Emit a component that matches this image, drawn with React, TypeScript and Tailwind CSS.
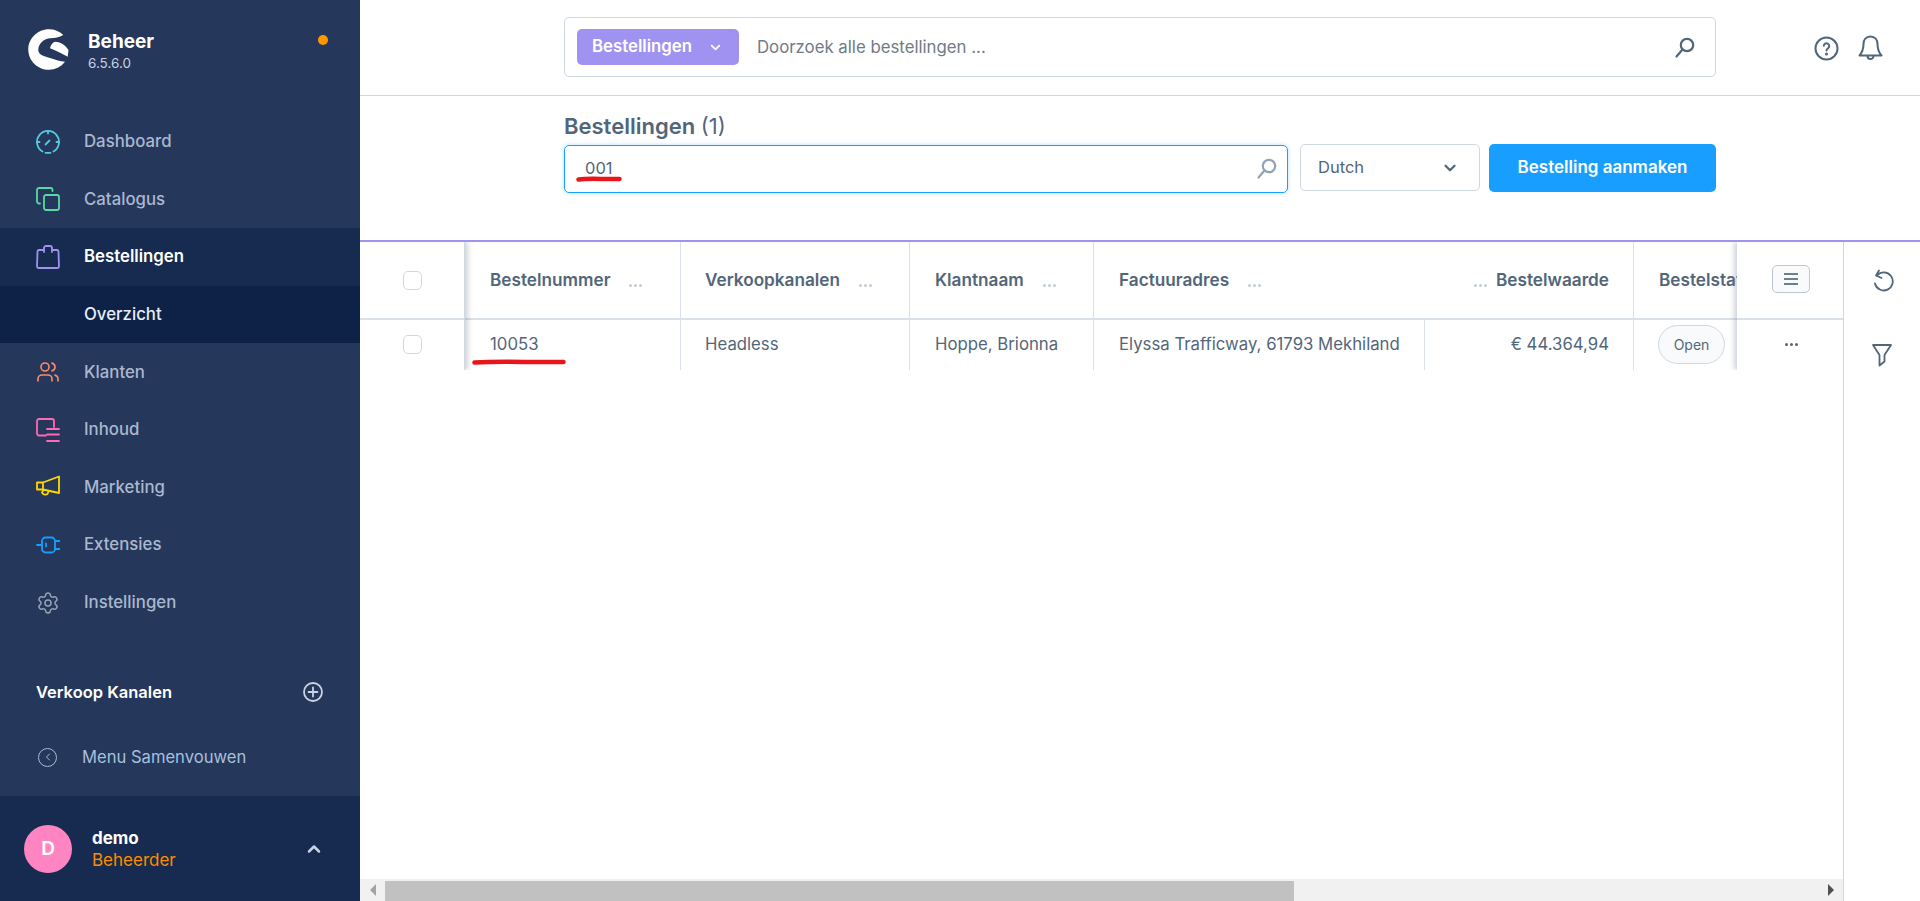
import React from "react";
import { ChevronDown, ChevronUp, ChevronLeft, Settings, Users } from "lucide-react";

const Ico = ({ c, children, w = 1.8 }: { c: string; children: React.ReactNode; w?: number }) => (
  <svg width="24" height="24" viewBox="0 0 24 24" fill="none" stroke={c} strokeWidth={w} strokeLinecap="round" strokeLinejoin="round">
    {children}
  </svg>
);

const nav: { label: string; icon: React.ReactNode }[] = [
  {
    label: "Dashboard",
    icon: (
      <Ico c="#57c8e0">
        <path d="M6.500 21.500A11 11 0 1 1 17.500 21.500" />
        <path d="M9.500 22.800h5M12 1v2.500M1 12h2.500M20.500 12H23M9.500 14.500l4-4" />
      </Ico>
    ),
  },
  {
    label: "Catalogus",
    icon: (
      <Ico c="#57d9a3">
        <path d="M4 16.500H3a2 2 0 0 1-2-2V3a2 2 0 0 1 2-2h11.500a2 2 0 0 1 2 2v1" />
        <rect x="8" y="8" width="15" height="15" rx="2" />
      </Ico>
    ),
  },
  {
    label: "Bestellingen",
    icon: (
      <Ico c="#a092f0">
        <path d="M8 5H3a1.500 1.500 0 0 0-1.500 1.500L1 21.500A1.500 1.500 0 0 0 2.500 23h19a1.500 1.500 0 0 0 1.500-1.500l-.5-15A1.500 1.500 0 0 0 21 5h-5" />
        <path d="M8 7V3a2 2 0 0 1 2-2h4a2 2 0 0 1 2 2v4" />
      </Ico>
    ),
  },
  {
    label: "Klanten",
    icon: <Users size={28} color="#ff8a65" strokeWidth={1.6} />,
  },
  {
    label: "Inhoud",
    icon: (
      <Ico c="#ff68b4">
        <path d="M10 17.500H3a2 2 0 0 1-2-2V3a2 2 0 0 1 2-2h13a2 2 0 0 1 2 2v6" />
        <path d="M11 11h12M11 16.500h12M11 23h12" />
      </Ico>
    ),
  },
  {
    label: "Marketing",
    icon: (
      <Ico c="#ffd700">
        <path d="M7 7.500 23 1.500v16.500L7 14.500zM7 7.500H1v7h6" />
        <path d="M7.500 15l-1.500 2.500c0 1.500 3.500 3 5.500 1.500l1-2.500" />
      </Ico>
    ),
  },
  {
    label: "Extensies",
    icon: (
      <Ico c="#189eff">
        <rect x="6" y="4.500" width="13" height="15" rx="3.500" />
        <path d="M1 12h5M19 8h4.500M19 16h4.500M10 10.500v3" />
      </Ico>
    ),
  },
  {
    label: "Instellingen",
    icon: <Settings size={28} color="#93a3b4" strokeWidth={1.5} />,
  },
];

const Search = ({ c }: { c: string }) => (
  <svg width="22" height="22" viewBox="0 0 22 22" fill="none" stroke={c} strokeWidth="2.200" strokeLinecap="round">
    <circle cx="13" cy="8" r="6.200" />
    <path d="M8.500 12.500 2.500 19.500" />
  </svg>
);

const Dots = ({ c = "#c3ccd6" }: { c?: string }) => (
  <span className="inline-flex gap-[2px]">
    <span className="w-[3px] h-[3px] rounded-full" style={{ background: c }} />
    <span className="w-[3px] h-[3px] rounded-full" style={{ background: c }} />
    <span className="w-[3px] h-[3px] rounded-full" style={{ background: c }} />
  </span>
);

const Check = () => <div className="w-[19px] h-[19px] rounded-[5px] border border-[#d1d9e0] bg-white" />;

const Underline = ({ w, className }: { w: number; className: string }) => (
  <svg className={className} width={w} height="6" viewBox={`0 0 ${w} 6`} fill="none">
    <path d={`M2.500 3.500C${w * 0.3} 2 ${w * 0.6} 3.500 ${w - 2.5} 3`} stroke="#e8161b" strokeWidth="4.500" strokeLinecap="round" />
  </svg>
);

export default function App() {
  return (
    <div className="flex w-full h-screen overflow-hidden bg-white font-['Inter',sans-serif] text-[#52667a]">
      {/* Sidebar */}
      <aside className="w-[360px] shrink-0 h-full flex flex-col bg-[#25375a]">
        <div className="h-[113px] shrink-0 pl-[28px] pr-[32px] pt-[29px] flex items-start">
          <svg width="41" height="41" viewBox="0 0 41 41" fill="#fff">
            <path d="M35.300 6C31.500 2 26.500.200 21 .200 9.500.200.300 9.300.300 20.500S9.500 40.800 21 40.800c6 0 12-2.800 16-8-4.500-.5-9.500-1.800-15-3.800-7-2-11.700-3.500-11.700-8 0-6.500 6-11.500 12-11.700 4.500-.2 9-.8 13-3.300z" />
            <path d="M22 19.300c.8-3.500 3-6.600 5.500-6.600 5 0 10.500 4 13 8.300l-.8 6.700c-6.500-3.500-12-6-17.700-8.400z" />
          </svg>
          <div className="ml-[19px] flex-1">
            <div className="text-[19px] font-bold text-white leading-[24px] mt-[1px]">Beheer</div>
            <div className="text-[13.500px] text-[#c4d3e6] leading-[18px]">6.5.6.0</div>
          </div>
          <div className="w-[10px] h-[10px] rounded-full bg-[#ff9800] mt-[6px]" />
        </div>
        <nav className="flex flex-col">
          {nav.map((n) => (
            <React.Fragment key={n.label}>
              <div className={`h-[57.600px] flex items-center pl-[36px] ${n.label === "Bestellingen" ? "bg-[#172a4f]" : ""}`}>
                <span className="w-[24px] h-[26px] flex items-center justify-center">{n.icon}</span>
                <span className={`ml-[24px] text-[16.800px] font-medium ${n.label === "Bestellingen" ? "text-white font-semibold" : "text-[#aab8d0]"}`}>{n.label}</span>
              </div>
              {n.label === "Bestellingen" && (
                <div className="h-[57.600px] flex items-center pl-[84px] bg-[#0e2248] text-[16.800px] font-medium text-[#e6edf6]">Overzicht</div>
              )}
            </React.Fragment>
          ))}
        </nav>
        <div className="flex-1 flex flex-col">
          <div className="mt-[48px] pl-[36px] pr-[37px] flex items-center justify-between h-[26px]">
            <span className="text-[16.500px] font-semibold text-white">Verkoop Kanalen</span>
            <svg width="20" height="20" viewBox="0 0 20 20" fill="none" stroke="#c8d3e4" strokeWidth="1.800" strokeLinecap="round">
              <circle cx="10" cy="10" r="9" />
              <path d="M10 5.500v9M5.500 10h9" />
            </svg>
          </div>
          <div className="mt-[39px] pl-[38px] flex items-center h-[26px]">
            <span className="w-[19px] h-[19px] rounded-full border-[1.500px] border-[#a8bbd6] flex items-center justify-center">
              <ChevronLeft size={12} color="#a8bbd6" strokeWidth={2} />
            </span>
            <span className="ml-[25px] text-[16.600px] text-[#a8c0de]">Menu Samenvouwen</span>
          </div>
        </div>
        <div className="h-[105px] shrink-0 bg-[#172a4f] flex items-center pl-[24px] pr-[36px] pt-[1px]">
          <div className="w-[48px] h-[48px] rounded-full bg-[#ff85c2] flex items-center justify-center text-white font-semibold text-[19px]">D</div>
          <div className="ml-[20px] flex-1">
            <div className="text-[17px] font-bold text-white leading-[22px]">demo</div>
            <div className="text-[17px] text-[#ff8c00] leading-[22px]">Beheerder</div>
          </div>
          <ChevronUp size={20} color="#c8d3e4" strokeWidth={3} />
        </div>
      </aside>

      {/* Main */}
      <main className="flex-1 min-w-0 h-full flex flex-col">
        <div className="h-[96px] shrink-0 border-b border-[#d1d9e0] pl-[204px] pt-[17px] flex items-start">
          <div className="w-[1152px] h-[60px] rounded-[5px] border border-[#d1d9e0] flex items-center pl-[12px] pr-[19px]">
            <div className="w-[162px] h-[36px] rounded-[5px] bg-[#a092f0] flex items-center pl-[15px] text-white font-semibold text-[16.800px]">
              Bestellingen
              <ChevronDown size={15} strokeWidth={3} className="ml-[16px]" />
            </div>
            <div className="ml-[18px] mt-[1px] flex-1 text-[16.800px] text-[#6f7b86]">Doorzoek alle bestellingen ...</div>
            <span className="mt-[1px]"><Search c="#52667a" /></span>
          </div>
          <div className="ml-[98px] mt-[18px] flex items-center gap-[19px]">
            <svg width="25" height="25" viewBox="0 0 25 25" fill="none" stroke="#52667a" strokeWidth="2">
              <circle cx="12.500" cy="12.500" r="11" />
              <path d="M9.800 9.800a2.700 2.700 0 1 1 4.500 2.200c-1 .8-1.800 1.300-1.800 2.600" strokeLinecap="round" />
              <circle cx="12.500" cy="18" r=".6" fill="#52667a" />
            </svg>
            <svg width="25" height="26" viewBox="0 0 25 26" fill="none" stroke="#52667a" strokeWidth="2" strokeLinejoin="round" strokeLinecap="round">
              <path d="M12.500 1.500c-4.500 0-7 3.500-7 7.500 0 5-1 8-4 11.500h22c-3-3.500-4-6.500-4-11.500 0-4-2.500-7.500-7-7.500z" />
              <path d="M9.500 21a3 3 0 0 0 6 0" />
            </svg>
          </div>
        </div>

        <div className="h-[144px] shrink-0 pl-[204px]">
          <div className="mt-[16px] h-[28px] text-[22px] leading-[28px] font-semibold text-[#52667a]">
            Bestellingen <span className="font-normal">(1)</span>
          </div>
          <div className="mt-[5px] flex items-start">
            <div className="relative w-[724px] h-[48px] rounded-[5px] border border-[#189eff] shadow-[0_0_4px_rgba(24,158,255,0.35)] flex items-center pl-[20px] pr-[9px]">
              <span className="flex-1 text-[16.500px] text-[#52667a] -mt-[2px]">001</span>
              <Search c="#93a3b4" />
              <Underline w={46} className="absolute left-[11px] top-[30px]" />
            </div>
            <div className="ml-[12px] -mt-[1px] w-[180px] h-[47px] rounded-[5px] border border-[#d1d9e0] flex items-center justify-between pl-[17px] pr-[20px] text-[16.500px] text-[#52667a]">
              Dutch
              <ChevronDown size={18} strokeWidth={3} color="#52667a" />
            </div>
            <div className="ml-[9px] -mt-[1px] w-[227px] h-[48px] rounded-[5px] bg-[#189eff] flex items-center justify-center text-white font-semibold text-[17px]">
              Bestelling aanmaken
            </div>
          </div>
        </div>

        <div className="flex-1 min-h-0 flex border-t-2 border-[#a092f0]">
          <div className="relative flex-1 min-w-0 flex flex-col">
            <div className="relative h-[128px] flex overflow-hidden">
              {/* fixed select column */}
              <div className="relative z-10 w-[105px] shrink-0 bg-white border-r border-[#d1d9e0] shadow-[3px_0_5px_rgba(120,130,145,0.35)]">
                <div className="h-[78px] border-b-2 border-[#d9e0e7] flex items-center pl-[43px]"><Check /></div>
                <div className="h-[50px] flex items-center pl-[43px] pb-[2px]"><Check /></div>
              </div>
              {/* columns */}
              <div className="flex-1 min-w-0 overflow-hidden">
                <div className="w-[1400px] h-[78px] flex border-b-2 border-[#d9e0e7] text-[17.200px] font-semibold">
                  <div className="w-[216px] border-r border-[#d9e0e7] flex items-center pl-[25px]">Bestelnummer<span className="ml-[19px] mt-[1px]"><Dots /></span></div>
                  <div className="w-[229px] border-r border-[#d9e0e7] flex items-center pl-[24px]">Verkoopkanalen<span className="ml-[19px] mt-[1px]"><Dots /></span></div>
                  <div className="w-[184px] border-r border-[#d9e0e7] flex items-center pl-[25px]">Klantnaam<span className="ml-[19px] mt-[1px]"><Dots /></span></div>
                  <div className="w-[540px] border-r border-[#d9e0e7] flex items-center pl-[25px] pr-[24px]">
                    Factuuradres<span className="ml-[19px] mt-[1px]"><Dots /></span>
                    <span className="ml-auto mt-[1px] mr-[9px]"><Dots /></span>Bestelwaarde
                  </div>
                  <div className="w-[200px] flex items-center pl-[25px]">Bestelstatus</div>
                </div>
                <div className="w-[1400px] h-[50px] flex text-[16.750px] font-normal">
                  <div className="w-[216px] border-r border-[#d9e0e7] flex items-center pl-[25px]">10053</div>
                  <div className="w-[229px] border-r border-[#d9e0e7] flex items-center pl-[24px]">Headless</div>
                  <div className="w-[184px] border-r border-[#d9e0e7] flex items-center pl-[25px]">Hoppe, Brionna</div>
                  <div className="w-[331px] border-r border-[#d9e0e7] flex items-center pl-[25px] whitespace-nowrap">Elyssa Trafficway, 61793 Mekhiland</div>
                  <div className="w-[209px] border-r border-[#d9e0e7] flex items-center justify-end pr-[24px]">€ 44.364,94</div>
                  <div className="w-[200px] flex items-center pl-[24px] pb-[2px]">
                    <span className="w-[67px] h-[39px] rounded-full border border-[#d1d9e0] bg-[#f9fafb] flex items-center justify-center text-[14px]">Open</span>
                  </div>
                </div>
              </div>
              {/* actions column */}
              <div className="relative z-10 w-[106px] shrink-0 bg-white shadow-[-3px_0_5px_rgba(120,130,145,0.35)]">
                <div className="h-[78px] border-b-2 border-[#d9e0e7] flex items-center justify-center pl-[2px]">
                  <div className="w-[38px] h-[28px] rounded-[5px] border border-[#bcc7d3] bg-[#f9fafb] flex flex-col items-center justify-center gap-[3px] -mt-[2px]">
                    <span className="w-[14px] h-[2px] bg-[#6d7f92]" />
                    <span className="w-[14px] h-[2px] bg-[#6d7f92]" />
                    <span className="w-[14px] h-[2px] bg-[#6d7f92]" />
                  </div>
                </div>
                <div className="h-[50px] flex items-center justify-center pb-[2px] pl-[2px]"><Dots c="#52667a" /></div>
              </div>
              <Underline w={94} className="absolute left-[112px] top-[117px] z-20" />
            </div>
            <div className="flex-1" />
            <div className="h-[22px] shrink-0 bg-[#f1f1f1] flex items-end">
              <div className="w-[25px] h-[22px] flex items-center justify-center">
                <span className="w-0 h-0 border-y-[6px] border-y-transparent border-r-[6px] border-r-[#a3a3a3]" />
              </div>
              <div className="w-[909px] h-[20px] bg-[#c1c1c1]" />
              <div className="flex-1" />
              <div className="w-[25px] h-[22px] flex items-center justify-center">
                <span className="w-0 h-0 border-y-[6px] border-y-transparent border-l-[6px] border-l-[#505050]" />
              </div>
            </div>
          </div>
          <div className="w-[77px] shrink-0 border-l border-[#d1d9e0] flex flex-col items-center pt-[27px] gap-[50px]">
            <svg width="24" height="24" viewBox="0 0 24 24" fill="none" stroke="#52667a" strokeWidth="1.800" strokeLinecap="round" strokeLinejoin="round">
              <path d="M7 6.500A9 9 0 1 1 5 14.500" />
              <path d="M9 1.500 6 6.500 11.500 9" />
            </svg>
            <svg width="24" height="24" viewBox="0 0 24 24" fill="none" stroke="#52667a" strokeWidth="1.800" strokeLinecap="round" strokeLinejoin="round">
              <path d="M3 2h18l-6.500 10v6.500L9.500 22.500V12z" />
            </svg>
          </div>
        </div>
      </main>
    </div>
  );
}
